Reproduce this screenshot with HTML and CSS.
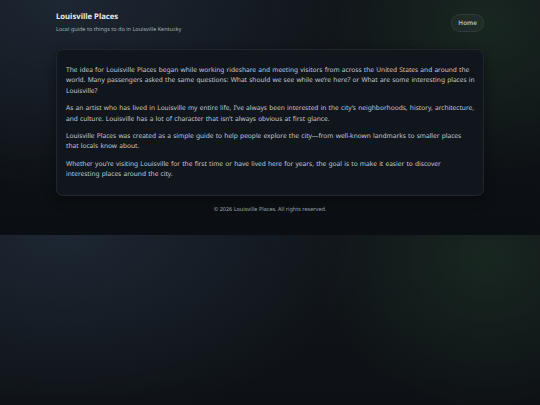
FILE: index.html
```html
<!DOCTYPE html>
<html lang="en">
<head>
<meta charset="utf-8">
<title>Louisville Places</title>
<link rel="stylesheet" href="styles.css">
</head>
<body>
<div class="wrap">
  <header class="site-header">
    <div class="brand">
      <h1 class="brand-title">Louisville Places</h1>
      <p class="brand-tag">Local guide to things to do in Louisville Kentucky</p>
    </div>
    <nav class="nav">
      <a class="nav-pill" href="#">Home</a>
    </nav>
  </header>
  <main class="card">
    <p>The idea for Louisville Places began while working rideshare and meeting visitors from across the United States and around the world. Many passengers asked the same questions: What should we see while we’re here? or What are some interesting places in Louisville?</p>
    <p>As an artist who has lived in Louisville my entire life, I’ve always been interested in the city’s neighborhoods, history, architecture, and culture. Louisville has a lot of character that isn’t always obvious at first glance.</p>
    <p>Louisville Places was created as a simple guide to help people explore the city—from well-known landmarks to smaller places that locals know about.</p>
    <p>Whether you’re visiting Louisville for the first time or have lived here for years, the goal is to make it easier to discover interesting places around the city.</p>
  </main>
  <footer class="site-footer">© 2026 Louisville Places. All rights reserved.</footer>
</div>
</body>
</html>
```
FILE: styles.css
```css
body {
  margin: 0;
  font-family: "Noto Sans", "Open Sans", sans-serif;
  text-rendering: geometricPrecision;
  color: #c3cad2;
  background-color: #0b0e12;
  background-image:
    radial-gradient(ellipse 300px 190px at 12% 0%, rgba(48, 66, 88, 0.4), rgba(48, 66, 88, 0) 100%),
    radial-gradient(ellipse 170px 150px at 90% 10%, rgba(40, 72, 46, 0.36), rgba(40, 72, 46, 0) 100%),
    linear-gradient(180deg, #101419 0%, #0e1216 60%, #0b0e12 100%);
  background-size: 100% 235px;
  background-repeat: repeat;
}
.wrap {
  width: 428px;
  margin: 0 auto;
}
.site-header {
  display: flex;
  justify-content: space-between;
  align-items: center;
  padding: 12px 0 15px;
}
.brand-title {
  margin: 0;
  font-size: 7.7px;
  line-height: 11px;
  font-weight: 700;
  color: #e8ecf0;
}
.brand-tag {
  margin: 3px 0 0;
  font-size: 5.5px;
  line-height: 7.5px;
  color: #a3adb7;
}
.nav-pill {
  display: block;
  padding: 4px 6px;
  border-radius: 999px;
  font-size: 6.4px;
  line-height: 8px;
  font-weight: 600;
  color: #aec2d4;
  text-decoration: none;
  background: rgba(255, 255, 255, 0.035);
  border: 1px solid rgba(255, 255, 255, 0.07);
}
.card {
  display: block;
  padding: 8.5px 7.65px 8.5px 9px;
  background: #11161d;
  border: 1px solid rgba(255, 255, 255, 0.07);
  border-radius: 7px;
  box-shadow: 0 4px 12px rgba(0, 0, 0, 0.45);
}
.card p {
  margin: 7px 0;
  font-size: 6.6px;
  line-height: 10.4px;
  word-spacing: 0.5px;
  color: #c3cad2;
}
.site-footer {
  padding: 10px 0 22px;
  text-align: center;
  font-size: 5.5px;
  line-height: 7.5px;
  color: #9aa3ad;
}
```
